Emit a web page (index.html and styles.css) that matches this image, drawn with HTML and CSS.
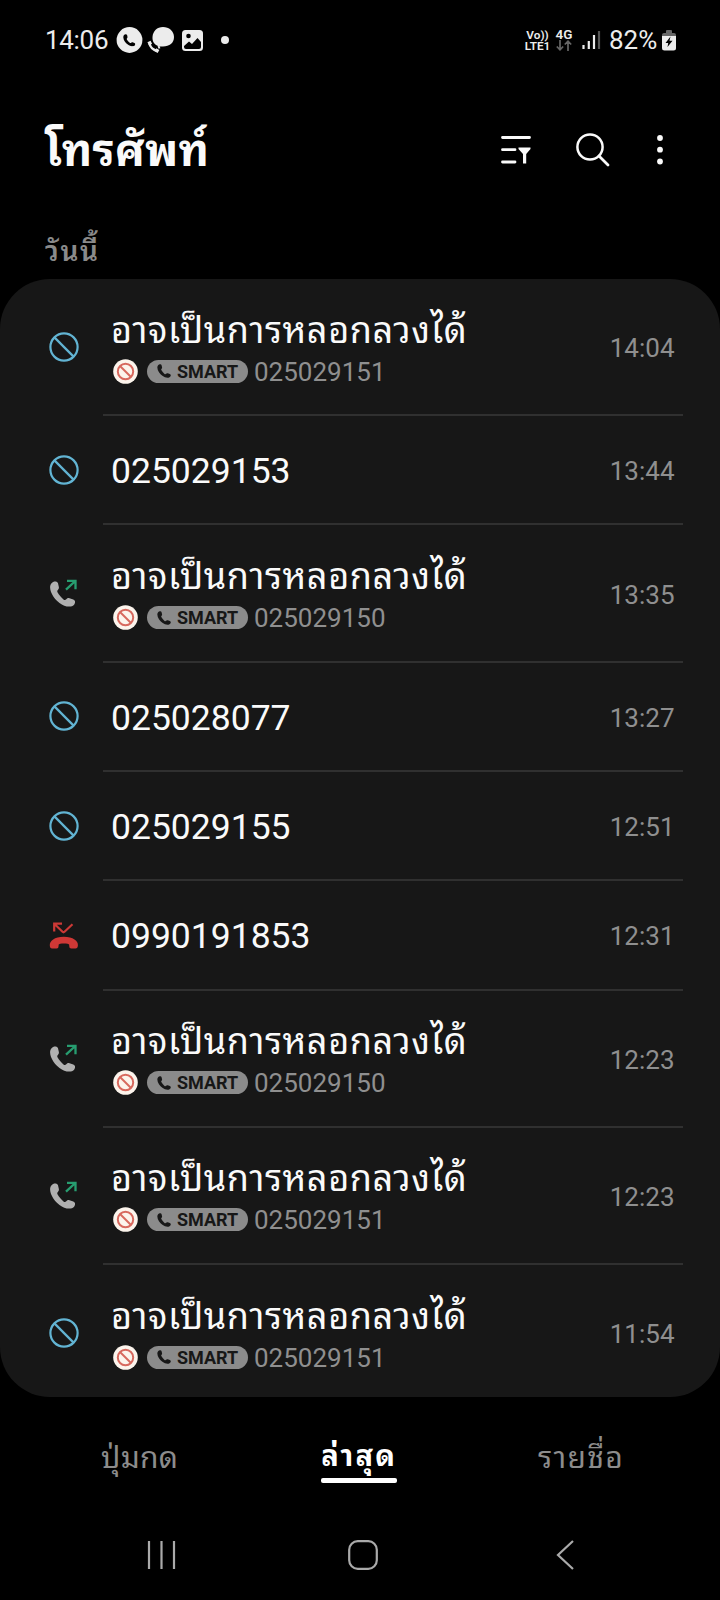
FILE: index.html
```html
<!DOCTYPE html>
<html lang="th">
<head>
<meta charset="utf-8">
<title>โทรศัพท์</title>
<link rel="stylesheet" href="styles.css">
</head>
<body>
<svg class="defs" width="0" height="0">
  <defs>
    <symbol id="blocked" viewBox="0 0 30 30"><circle cx="15" cy="15" r="13.6" fill="none" stroke="#62b4d3" stroke-width="2.2"/><path d="M5.4 5.4 24.6 24.6" stroke="#62b4d3" stroke-width="2.2"/></symbol>
    <symbol id="handset" viewBox="0 0 26 26"><path d="M5.5.5C3 .5.6 3 .6 6.500C.8 12.500 5.500 18.500 10 22C14 25.200 19 26.300 22.500 25.200C24.500 24.500 25.500 22.500 25.600 21C25.600 19.800 24.800 19 23.800 18.600L20 17.200C18.600 16.700 17.600 17.200 16.800 18.200C16 19.200 15 19.200 14 18.400C11.500 16.500 9.500 14 8 11.300C7.500 10.200 7.800 9.500 8.500 8.800C9.400 8 9.600 7 9.300 5.700L8.500 2.300C8.100 1 7 .5 5.500 .5Z" fill="currentColor"/></symbol>
    <symbol id="outgoing" viewBox="0 0 30 30"><use href="#handset" x="0.500" y="3" width="26" height="26" color="#b0b0b0"/><path d="M17 11.700 26.300 3M18 2.800H26.500V11.300" fill="none" stroke="#279d70" stroke-width="2.300"/></symbol>
    <symbol id="missed" viewBox="0 0 30 30"><path d="M5.200 11.500V3.700H13M5.500 4 13.500 11.800Q14.500 12.700 15.500 11.800L23.500 4.300" fill="none" stroke="#cc3936" stroke-width="2.200"/><path d="M.8 25.500C.5 21 5.500 16.800 14.800 16.800C24 16.800 29.500 21 28.900 25.500Q28.700 28.500 26.500 28.500H22.200Q20.200 28.500 20.200 26V24.800C20.200 23 9.600 23 9.600 24.800V26Q9.600 28.500 7.600 28.500H3Q.9 28.500 .8 25.500Z" fill="#cf3836"/></symbol>
    <symbol id="spam" viewBox="0 0 25 25"><circle cx="12.500" cy="12.500" r="12.300" fill="#fcf4ec"/><circle cx="12.500" cy="12.500" r="7.700" fill="none" stroke="#d7695e" stroke-width="2"/><path d="M7 7 18 18" stroke="#d7695e" stroke-width="2"/></symbol>
  </defs>
</svg>
<header class="status">
  <span class="clock">14:06</span>
  <svg width="114" height="28" viewBox="0 0 114 28">
    <circle cx="13.500" cy="14" r="12.900" fill="#ececec"/>
    <use href="#handset" x="7" y="8" width="12.500" height="12.500" color="#000"/>
    <path d="M47 1C53 1 58 5 58 11S53.500 20.500 47 20.500C45 20.500 43 20.500 42 20C38 18.500 36.300 15 36.500 11C37 5 41 1 47 1Z" fill="#ececec"/>
    <path d="M33.500 17.500C34 20.500 37 24 41.500 25" fill="none" stroke="#ececec" stroke-width="2.500"/><path d="M33 15.500 34.500 18.500M39.500 23.800 42.500 25.500" stroke="#ececec" stroke-width="3.500"/>
    <path d="M42.500 20 43.500 22.500" stroke="#ececec" stroke-width="2"/>
    <rect x="66" y="4" width="21" height="21" rx="3.500" fill="#ececec"/>
    <path d="M68 20 73 15.500 76 18 81.500 12 85 16V21Q85 23 83 23H70Q68 23 68 21Z" fill="#000"/><circle cx="72.500" cy="10" r="2.300" fill="#000"/>
  </svg>
  <i class="more"></i>
  <div class="volte"><span>Vo))</span><span>LTE1</span></div>
  <div class="net"><span>4G</span><svg width="16" height="11" viewBox="0 0 16 11"><path d="M4 0V10M.8 6.500 4 9.800 7.200 6.500M12 11V1M8.800 4.500 12 1.200 15.200 4.500" fill="none" stroke="#666" stroke-width="1.700"/></svg></div>
  <svg class="signal" width="19" height="20" viewBox="0 0 19 20"><path d="M1.500 15V19M6.800 11V19M12 5V19" stroke="#ececec" stroke-width="2.200"/><path d="M17 1V19" stroke="#555" stroke-width="2.200"/></svg>
  <span class="percent">82%</span>
  <svg class="battery" width="14" height="21" viewBox="0 0 14 21"><path d="M0 7V5Q0 3 2 3H4V1Q4 0 5 0H9Q10 0 10 1V3H12Q14 3 14 5V7Z" fill="#666"/><path d="M0 6H14V18Q14 20.500 11.500 20.500H2.500Q0 20.500 0 18Z" fill="#ececec"/><path d="M8.500 6.500 3.500 13H6.200L5.500 17 10.500 10.800H7.500Z" fill="#000"/></svg>
</header>
<div class="appbar">
  <h1>โทรศัพท์</h1>
  <svg width="30" height="30" viewBox="0 0 30 30"><path d="M1.500 2.500H28.500M1.500 14.700H14M1.500 27H14" stroke="#fafafa" stroke-width="2.800" stroke-linecap="round"/><path d="M17.500 12.500H29.500V14L25.200 19V28.500H22V19L17.500 14Z" fill="#fafafa"/></svg>
  <svg class="search" width="34" height="34" viewBox="0 0 34 34"><circle cx="14" cy="14" r="12.600" fill="none" stroke="#fafafa" stroke-width="2.500"/><path d="M23 23 32 32" stroke="#fafafa" stroke-width="2.800" stroke-linecap="round"/></svg>
  <svg class="dots" width="6" height="30" viewBox="0 0 6 30"><circle cx="3" cy="3" r="2.900" fill="#fafafa"/><circle cx="3" cy="14.700" r="2.900" fill="#fafafa"/><circle cx="3" cy="26.500" r="2.900" fill="#fafafa"/></svg>
</div>
<h2>วันนี้</h2>
<main>
  <div class="row tall"><svg class="kind"><use href="#blocked"/></svg><div class="info"><div class="name thai">อาจเป็นการหลอกลวงได้</div><div class="sub"><svg class="spam"><use href="#spam"/></svg><span class="smart"><svg><use href="#handset"/></svg>SMART</span><span>025029151</span></div></div><time>14:04</time></div>
  <div class="row"><svg class="kind"><use href="#blocked"/></svg><div class="info"><div class="name">025029153</div></div><time>13:44</time></div>
  <div class="row tall"><svg class="kind"><use href="#outgoing"/></svg><div class="info"><div class="name thai">อาจเป็นการหลอกลวงได้</div><div class="sub"><svg class="spam"><use href="#spam"/></svg><span class="smart"><svg><use href="#handset"/></svg>SMART</span><span>025029150</span></div></div><time>13:35</time></div>
  <div class="row"><svg class="kind"><use href="#blocked"/></svg><div class="info"><div class="name">025028077</div></div><time>13:27</time></div>
  <div class="row"><svg class="kind"><use href="#blocked"/></svg><div class="info"><div class="name">025029155</div></div><time>12:51</time></div>
  <div class="row"><svg class="kind"><use href="#missed"/></svg><div class="info"><div class="name">0990191853</div></div><time>12:31</time></div>
  <div class="row tall"><svg class="kind"><use href="#outgoing"/></svg><div class="info"><div class="name thai">อาจเป็นการหลอกลวงได้</div><div class="sub"><svg class="spam"><use href="#spam"/></svg><span class="smart"><svg><use href="#handset"/></svg>SMART</span><span>025029150</span></div></div><time>12:23</time></div>
  <div class="row tall"><svg class="kind"><use href="#outgoing"/></svg><div class="info"><div class="name thai">อาจเป็นการหลอกลวงได้</div><div class="sub"><svg class="spam"><use href="#spam"/></svg><span class="smart"><svg><use href="#handset"/></svg>SMART</span><span>025029151</span></div></div><time>12:23</time></div>
  <div class="row tall"><svg class="kind"><use href="#blocked"/></svg><div class="info"><div class="name thai">อาจเป็นการหลอกลวงได้</div><div class="sub"><svg class="spam"><use href="#spam"/></svg><span class="smart"><svg><use href="#handset"/></svg>SMART</span><span>025029151</span></div></div><time>11:54</time></div>
</main>
<nav class="tabs"><span class="keypad">ปุ่มกด</span><span class="active">ล่าสุด</span><span>รายชื่อ</span></nav>
<footer>
  <svg width="30" height="30" viewBox="0 0 30 30"><path d="M2 1V29M14.500 1V29M27 1V29" stroke="#aaa" stroke-width="2.200"/></svg>
  <svg width="30" height="30" viewBox="0 0 30 30"><rect x="1.200" y="1.200" width="27.600" height="27.600" rx="8.500" fill="none" stroke="#aaa" stroke-width="2.200"/></svg>
  <svg width="30" height="30" viewBox="0 0 30 30"><path d="M24 1 9 15 24 29" fill="none" stroke="#aaa" stroke-width="2.200"/></svg>
</footer>
</body>
</html>
```
FILE: styles.css
```css
* { box-sizing: border-box; }
body { margin: 0; width: 720px; height: 1600px; overflow: hidden; background: #000; color: #fafafa; font-family: Roboto, "Noto Sans Thai Looped", "Droid Sans Thai", Loma, Garuda, "Noto Sans Thai", "Noto Sans", sans-serif; }
svg { display: block; flex: none; }
.defs { position: absolute; }
.status { display: flex; align-items: center; height: 80px; padding-left: 45px; color: #ececec; }
.clock, .percent { font-size: 26px; line-height: 30px; white-space: nowrap; }
.clock { width: 71px; letter-spacing: -0.300px; }
.more { width: 8px; height: 8px; margin-left: -9px; border-radius: 50%; background: #ececec; }
.volte { display: flex; flex-direction: column; align-items: center; width: 27px; margin-left: 295px; padding-top: 1px; font-size: 11.800px; line-height: 11px; font-weight: 600; }
.net { display: flex; flex-direction: column; align-items: center; width: 18px; margin-left: 4px; font-size: 13.500px; line-height: 11px; font-weight: 600; }
.signal { margin-left: 9px; }
.percent { margin-left: 8px; width: 50px; }
.battery { margin-left: 3px; }
.appbar { display: flex; align-items: center; height: 140px; padding: 0 57px 1px 45px; }
h1 { margin: 0; flex: 1; padding-top: 2px; font-size: 44.500px; font-weight: 700; line-height: 60px; letter-spacing: 0.200px; }
.search { margin-left: 45px; }
.dots { margin-left: 47px; }
h2 { margin: 0; height: 59px; padding: 12px 0 0 45px; font-size: 28px; line-height: 40px; font-weight: 600; letter-spacing: 1.600px; color: #8a8a8a; }
main { height: 1118px; overflow: hidden; border-radius: 50px; background: #171717; }
.row { position: relative; display: flex; align-items: center; height: 109.300px; padding: 0 45.500px 2px 49px; }
.row.tall { height: 137.200px; }
.row:not(:last-child)::after { content: ""; position: absolute; left: 103px; right: 37px; bottom: 0; height: 2px; background: #303030; }
.kind { width: 30px; height: 30px; }
.info { flex: 1; margin-left: 32px; }
.name { padding-top: 3px; font-size: 35.500px; line-height: 42px; white-space: nowrap; }
.name.thai { padding-top: 4px; font-size: 36px; line-height: 45px; letter-spacing: 0.600px; }
.sub { display: flex; align-items: center; height: 35px; font-size: 26px; color: #8f8f8f; }
.sub > span:last-child { padding-top: 1px; }
.spam { width: 25px; height: 25px; margin-left: 2px; }
.smart { display: flex; align-items: center; width: 101px; height: 23px; margin: 0 6px 0 9px; padding-left: 10px; border-radius: 12px; background: #8b8b8b; color: #171717; font-size: 18px; font-weight: 700; }
.smart svg { width: 14px; height: 14px; margin-right: 6px; }
time { padding-top: 3px; font-size: 26px; line-height: 30px; color: #8f8f8f; }
.tabs { display: flex; justify-content: space-between; height: 103px; padding: 36px 96px 0 101px; font-size: 30px; line-height: 49px; letter-spacing: 1.300px; color: #8c8c8c; }
.tabs span { position: relative; height: 50px; }
.tabs .keypad { margin-right: 2px; letter-spacing: 0.300px; }
.tabs .active { color: #fff; font-size: 29px; line-height: 46px; letter-spacing: 2.200px; font-weight: 700; }
.active::after { content: ""; position: absolute; left: 0; right: 0; bottom: 0; height: 5px; border-radius: 2px; background: #fff; }
footer { display: flex; justify-content: space-between; padding: 40px 141px 0 147px; }
```
